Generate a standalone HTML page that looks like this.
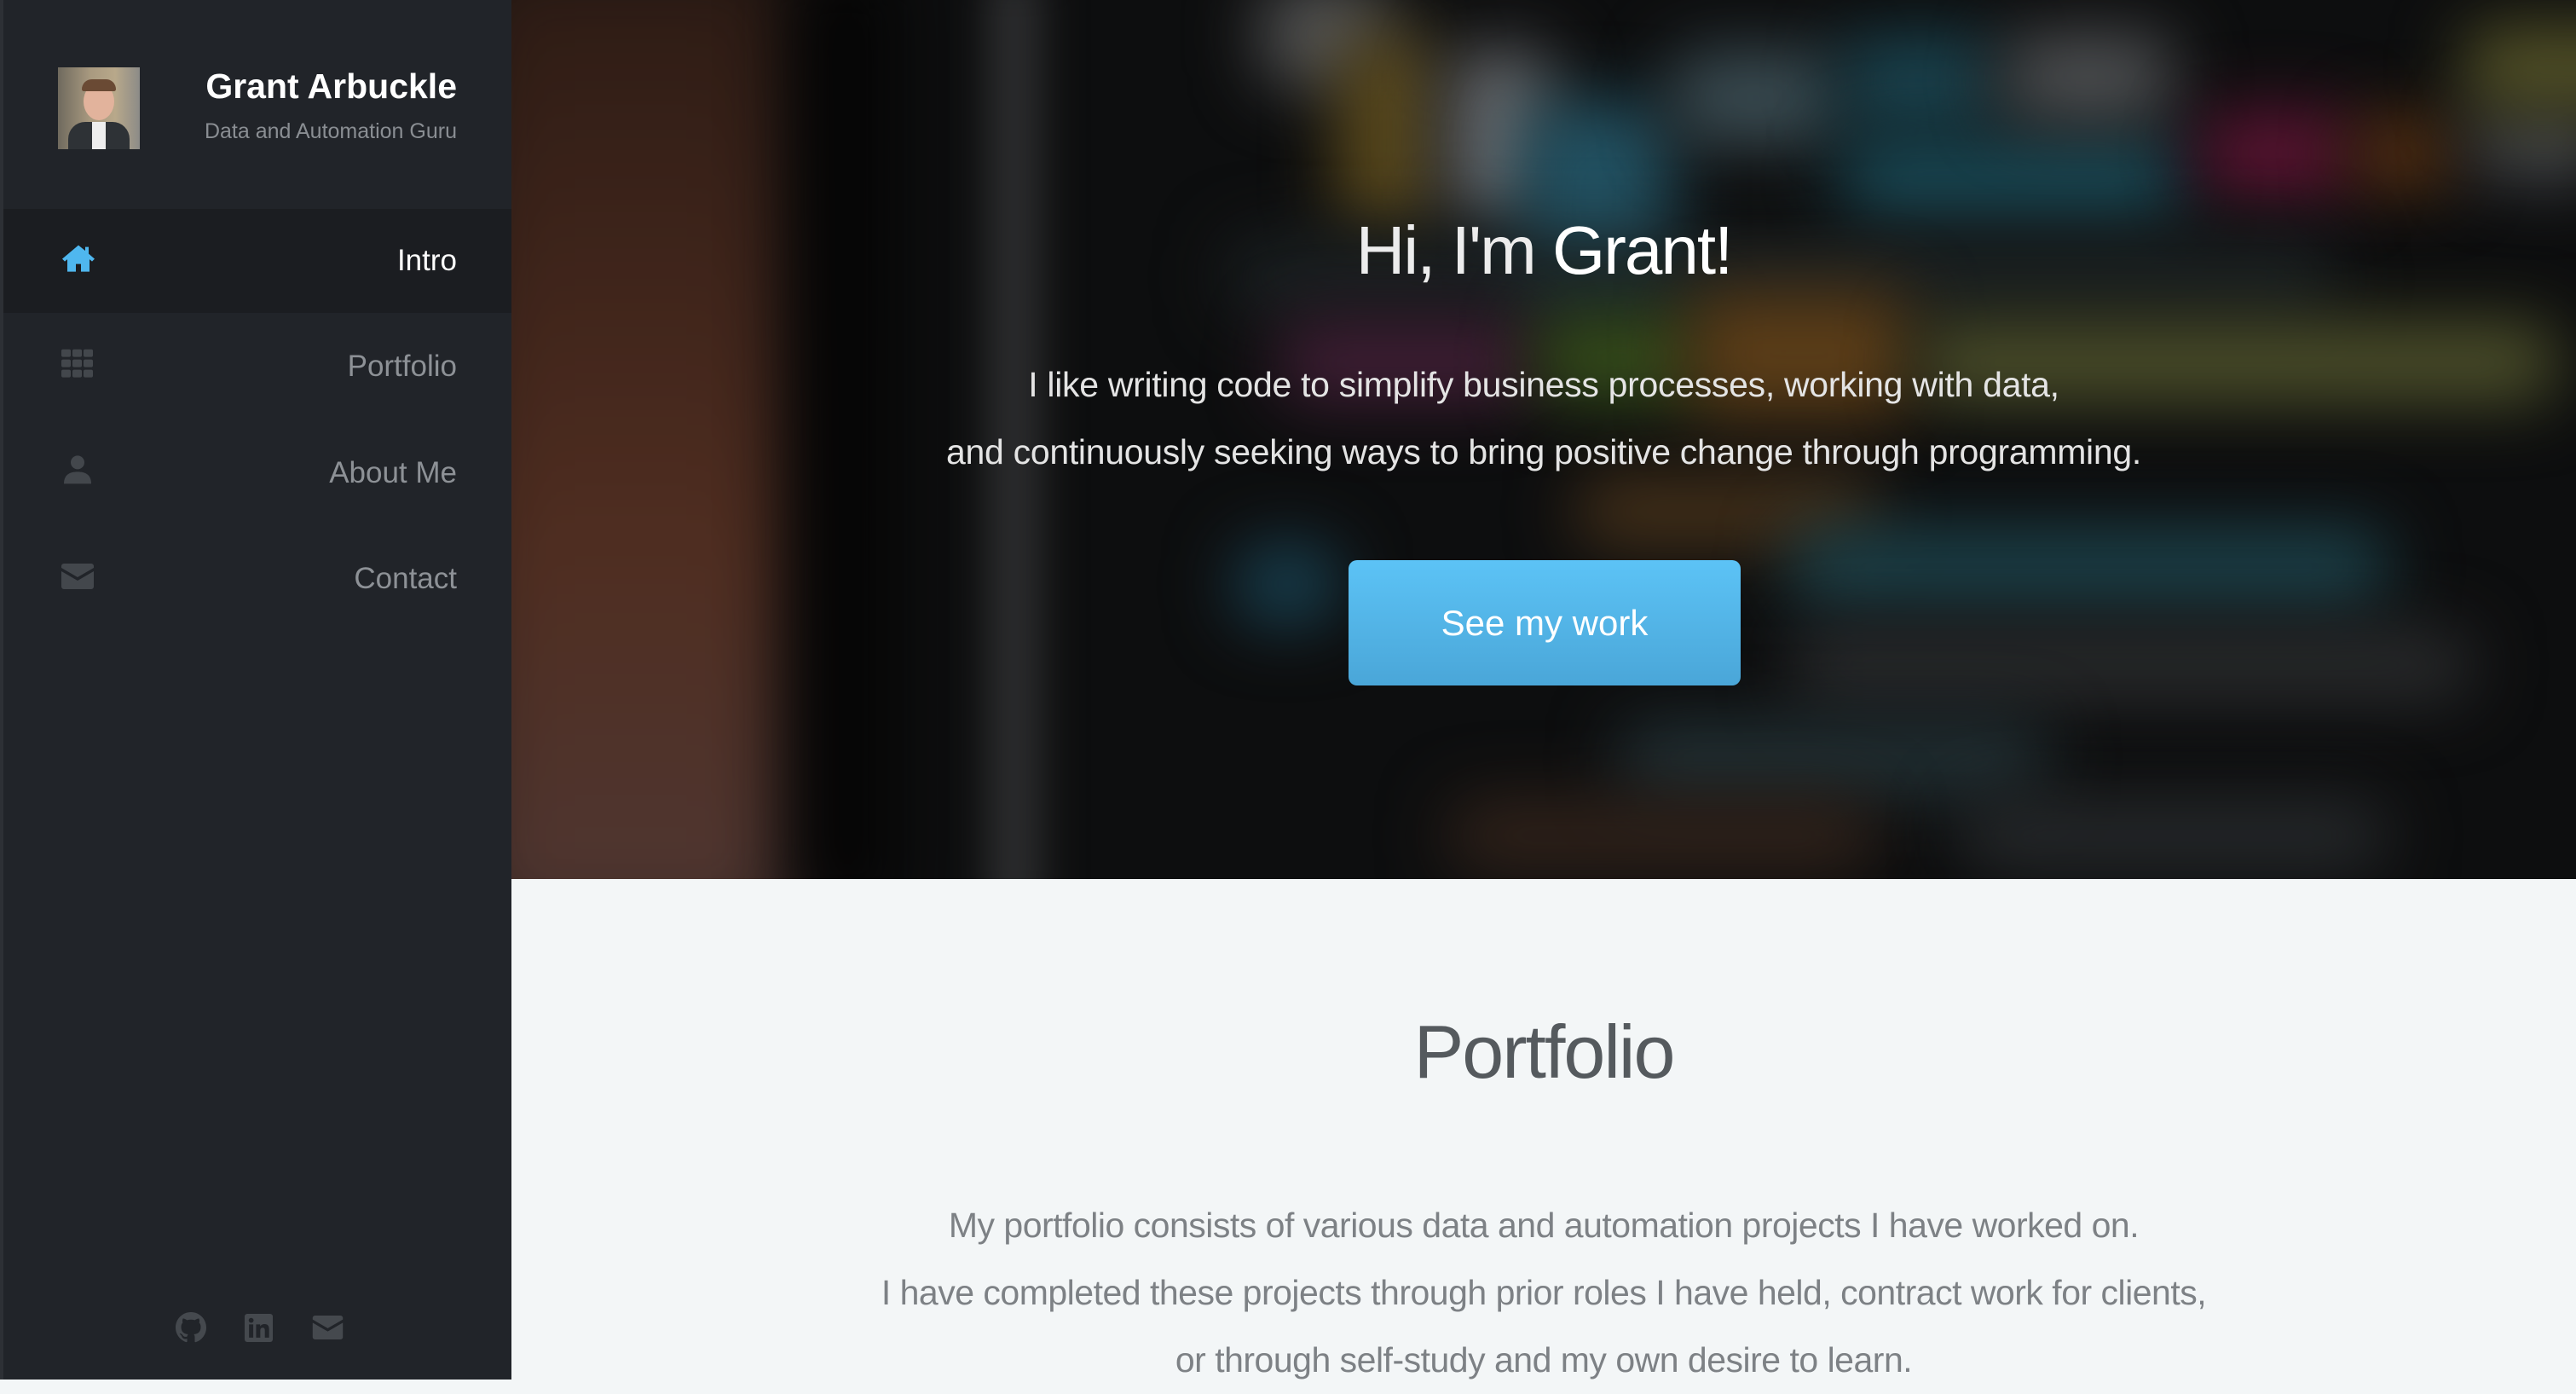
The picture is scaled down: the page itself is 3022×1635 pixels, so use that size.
<!DOCTYPE html>
<html><head><meta charset="utf-8">
<style>
*{margin:0;padding:0;box-sizing:border-box}
html,body{width:3022px;height:1618px;overflow:hidden;font-family:"Liberation Sans",sans-serif;background:#f3f6f7}
#side{position:absolute;left:0;top:0;width:600px;height:1618px;background:#212429;border-left:4px solid #2d3035}
#hero{position:absolute;left:600px;top:0;width:2422px;height:1031px;overflow:hidden;background:#121314}
.b{position:absolute;filter:blur(40px);border-radius:30px}
#main2{position:absolute;left:600px;top:1031px;width:2422px;height:587px;background:#f3f6f7}
.nav{position:absolute;left:0;width:596px;height:122px}
.nav span{position:absolute;right:64px;top:50%;transform:translateY(-50%);font-size:35px;color:#8d9196}
.nav svg{position:absolute;left:68px;top:50%;transform:translateY(-60%)}
</style></head><body>
<div id="side">
  <div style="position:absolute;left:64px;top:79px;width:96px;height:96px;background:linear-gradient(90deg,#6f6a5e,#a99a80 40%,#b8a88a 70%,#8c8b88);overflow:hidden">
    <div style="position:absolute;left:30px;top:18px;width:36px;height:44px;border-radius:50%;background:#e2b39c"></div>
    <div style="position:absolute;left:28px;top:14px;width:40px;height:14px;border-radius:20px 20px 4px 4px;background:#6a4a34"></div>
    <div style="position:absolute;left:12px;top:64px;width:72px;height:40px;border-radius:20px 20px 0 0;background:#2e3236"></div>
    <div style="position:absolute;left:40px;top:64px;width:16px;height:32px;background:#eee"></div>
  </div>
  <div style="position:absolute;right:64px;top:78px;font-size:41px;font-weight:bold;color:#fff;text-align:right">Grant Arbuckle</div>
  <div style="position:absolute;right:64px;top:140px;font-size:25px;color:#8a8e93">Data and Automation Guru</div>
  <div class="nav" style="top:245px;background:#1b1d21"><svg width="40" height="34" viewBox="0 0 40 34"><path d="M20 2L1 18l3 3 3-2.5V33h10v-9h6v9h10V18.5l3 2.5 3-3-7-6V4h-4v4.5z" fill="#4fb7ef"/></svg><span style="color:#fff">Intro</span></div>
  <div class="nav" style="top:369px"><svg width="38" height="34" viewBox="0 0 38 34"><g fill="#43474c"><rect x="0" y="0" width="11" height="9" rx="2"/><rect x="13" y="0" width="11" height="9" rx="2"/><rect x="26" y="0" width="11" height="9" rx="2"/><rect x="0" y="12" width="11" height="9" rx="2"/><rect x="13" y="12" width="11" height="9" rx="2"/><rect x="26" y="12" width="11" height="9" rx="2"/><rect x="0" y="24" width="11" height="9" rx="2"/><rect x="13" y="24" width="11" height="9" rx="2"/><rect x="26" y="24" width="11" height="9" rx="2"/></g></svg><span>Portfolio</span></div>
  <div class="nav" style="top:494px"><svg width="38" height="36" viewBox="0 0 38 36"><g fill="#43474c"><circle cx="19" cy="9" r="8"/><path d="M3 34c0-10 6-14 16-14s16 4 16 14z"/></g></svg><span>About Me</span></div>
  <div class="nav" style="top:618px"><svg width="38" height="30" viewBox="0 0 38 30"><g fill="#43474c"><path d="M3 0h32a3 3 0 013 3v2L19 16 0 5V3a3 3 0 013-3z"/><path d="M0 9l19 11 19-11v18a3 3 0 01-3 3H3a3 3 0 01-3-3z"/></g></svg><span>Contact</span></div>
  <svg style="position:absolute;left:202px;top:1539px" width="36" height="36" viewBox="0 0 16 16"><path fill="#45494e" d="M8 0C3.58 0 0 3.58 0 8c0 3.54 2.29 6.53 5.47 7.59.4.07.55-.17.55-.38v-1.33c-2.23.48-2.7-1.07-2.7-1.07-.36-.93-.89-1.17-.89-1.17-.73-.5.06-.49.06-.49.8.06 1.23.83 1.23.83.71 1.22 1.87.87 2.33.66.07-.52.28-.87.5-1.07-1.78-.2-3.64-.89-3.64-3.95 0-.87.31-1.59.82-2.15-.08-.2-.36-1.02.08-2.12 0 0 .67-.21 2.2.82a7.6 7.6 0 014 0c1.53-1.04 2.2-.82 2.2-.82.44 1.1.16 1.92.08 2.12.51.56.82 1.27.82 2.15 0 3.07-1.87 3.75-3.65 3.95.29.25.54.73.54 1.48v2.2c0 .21.15.46.55.38A8.01 8.01 0 0016 8c0-4.42-3.58-8-8-8z"/></svg>
  <svg style="position:absolute;left:283px;top:1541px" width="33" height="33" viewBox="0 0 16 16"><rect width="16" height="16" rx="1.5" fill="#45494e"/><g fill="#212429"><rect x="2.5" y="6" width="2.4" height="7.5"/><circle cx="3.7" cy="3.7" r="1.4"/><path d="M6.5 6h2.3v1.1c.4-.7 1.3-1.3 2.5-1.3 2.1 0 2.6 1.3 2.6 3.2v4.5h-2.4V9.6c0-.9-.2-1.7-1.2-1.700-1.1 0-1.4.8-1.4 1.8v3.8H6.5z"/></g></svg>
  <svg style="position:absolute;left:362px;top:1543px" width="37" height="28" viewBox="0 0 38 30"><g fill="#45494e"><path d="M3 0h32a3 3 0 013 3v2L19 16 0 5V3a3 3 0 013-3z"/><path d="M0 9l19 11 19-11v18a3 3 0 01-3 3H3a3 3 0 01-3-3z"/></g></svg>
</div>
<div id="hero">
  <div class="b" style="left:-60px;top:-60px;width:400px;height:1160px;background:linear-gradient(180deg,#3a241b,#5a3426 40%,#6a3d2c 60%,#6a4a44);filter:blur(50px)"></div>
  <div class="b" style="left:330px;top:-40px;width:120px;height:1120px;background:#070707"></div>
  <div class="b" style="left:560px;top:-40px;width:60px;height:1120px;background:#3f4042;filter:blur(25px)"></div>
  <div class="b" style="left:880px;top:-20px;width:150px;height:120px;background:#707172"></div>
  <div class="b" style="left:970px;top:40px;width:110px;height:230px;background:#7a6326"></div>
  <div class="b" style="left:1100px;top:60px;width:120px;height:200px;background:#8a8c90"></div>
  <div class="b" style="left:1180px;top:120px;width:180px;height:220px;background:#2d6c82"></div>
  <div class="b" style="left:1360px;top:60px;width:200px;height:110px;background:#4f6770"></div>
  <div class="b" style="left:1560px;top:40px;width:180px;height:110px;background:#235a6a"></div>
  <div class="b" style="left:1560px;top:160px;width:400px;height:100px;background:#226273"></div>
  <div class="b" style="left:1750px;top:40px;width:200px;height:100px;background:#6a6d70"></div>
  <div class="b" style="left:1980px;top:130px;width:180px;height:100px;background:#7a1a43"></div>
  <div class="b" style="left:2160px;top:140px;width:120px;height:80px;background:#7a4318"></div>
  <div class="b" style="left:2300px;top:130px;width:160px;height:80px;background:#5f6266"></div>
  <div class="b" style="left:2290px;top:30px;width:280px;height:100px;background:#6f6d34"></div>
  <div class="b" style="left:840px;top:280px;width:1300px;height:90px;background:#242c2e"></div>
  <div class="b" style="left:900px;top:380px;width:300px;height:90px;background:#5a2a4a"></div>
  <div class="b" style="left:1200px;top:370px;width:200px;height:100px;background:#4a6a25"></div>
  <div class="b" style="left:1380px;top:340px;width:260px;height:150px;background:#7a5220"></div>
  <div class="b" style="left:1650px;top:380px;width:750px;height:90px;background:#6a6e3a"></div>
  <div class="b" style="left:1250px;top:560px;width:350px;height:80px;background:#614423"></div>
  <div class="b" style="left:1500px;top:620px;width:700px;height:90px;background:#265965"></div>
  <div class="b" style="left:850px;top:640px;width:120px;height:90px;background:#215970"></div>
  <div class="b" style="left:1500px;top:740px;width:800px;height:80px;background:#3a3c3e"></div>
  <div class="b" style="left:1300px;top:850px;width:500px;height:80px;background:#30454b"></div>
  <div class="b" style="left:1100px;top:940px;width:500px;height:80px;background:#453024"></div>
  <div class="b" style="left:1700px;top:940px;width:500px;height:80px;background:#35393c"></div>
  <div style="position:absolute;inset:0;background:rgba(0,0,0,0.25)"></div>
  <div style="position:absolute;left:0;width:2422px;top:248px;text-align:center;font-size:80px;color:#ececec;letter-spacing:-2px">Hi, I'm <span style="color:#fff">Grant!</span></div>
  <div style="position:absolute;left:0;width:2422px;top:412px;text-align:center;font-size:41px;line-height:79px;color:#e4e4e4;letter-spacing:-0.3px">I like writing code to simplify business processes, working with data,<br>and continuously seeking ways to bring positive change through programming.</div>
  <div style="position:absolute;left:982px;top:657px;width:460px;height:147px;border-radius:10px;background:linear-gradient(180deg,#5cc3f6,#4aa6d8);color:#fff;font-size:42px;text-align:center;line-height:147px">See my work</div>
</div>
<div id="main2">
  <div style="position:absolute;left:0;width:2422px;top:152px;text-align:center;font-size:88px;color:#555a5e;letter-spacing:-2px">Portfolio</div>
  <div style="position:absolute;left:0;width:2422px;top:367px;text-align:center;font-size:41px;line-height:79px;color:#7d8185;letter-spacing:-0.5px">My portfolio consists of various data and automation projects I have worked on.<br>I have completed these projects through prior roles I have held, contract work for clients,<br>or through self-study and my own desire to learn.</div>
</div>
</body></html>
